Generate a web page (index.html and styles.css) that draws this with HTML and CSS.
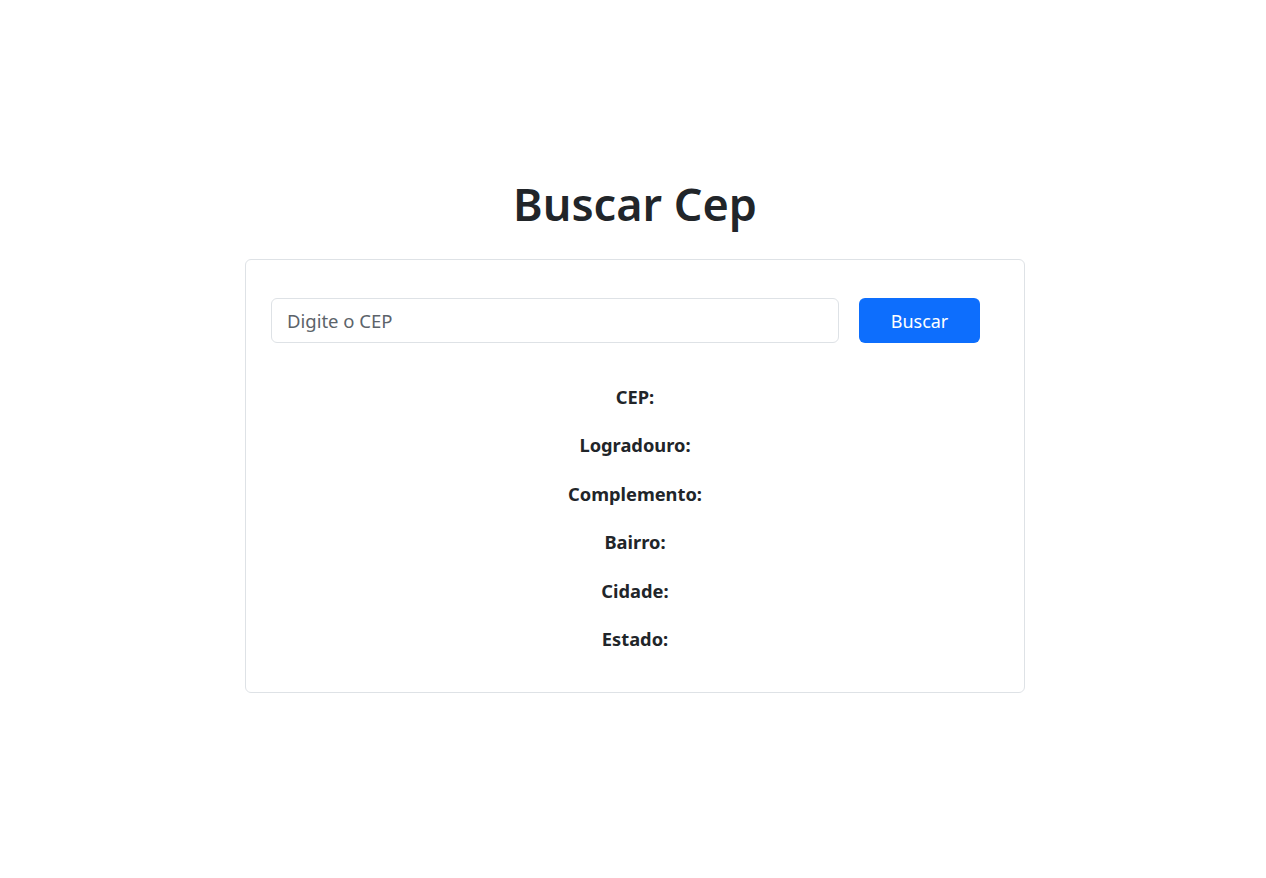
FILE: index.html
```html
<!DOCTYPE html>
<html lang="pt-BR">
<head>
<meta charset="utf-8">
<title>Buscar Cep</title>
<link rel="stylesheet" href="styles.css">
</head>
<body>
<main class="page">
  <h1 class="title">Buscar Cep</h1>
  <section class="card">
    <form class="search">
      <input class="search-input" type="text" placeholder="Digite o CEP">
      <button class="search-btn" type="button">Buscar</button>
    </form>
    <div class="results">
      <p class="field">CEP:</p>
      <p class="field">Logradouro:</p>
      <p class="field">Complemento:</p>
      <p class="field">Bairro:</p>
      <p class="field">Cidade:</p>
      <p class="field">Estado:</p>
    </div>
  </section>
</main>
</body>
</html>
```
FILE: styles.css
```css
* { box-sizing: border-box; }
html, body { margin: 0; padding: 0; background: #fff; }
body {
  font-family: "Noto Sans", "Open Sans", sans-serif;
  color: #212529;
}
.page {
  width: 780px;
  margin: 0 auto;
  padding-top: 176px;
  position: relative;
  left: 2px;
}
.title {
  margin: 0 0 27px;
  text-align: center;
  font-size: 45px;
  line-height: 56px;
  font-weight: 600;
  color: #212529;
}
.card {
  border: 1px solid #dee2e6;
  border-radius: 6px;
  padding: 38px 25px 40px 25px;
  height: 434px;
}
.search {
  display: flex;
  gap: 20px;
  width: 709px;
  margin: 0;
}
.search-input {
  width: 568px;
  height: 45px;
  border: 1px solid #dee2e6;
  border-radius: 6px;
  padding: 0 15px;
  font-family: inherit;
  font-size: 18.5px;
  color: #212529;
  outline: none;
}
.search-input::placeholder { color: #5c636a; }
.search-btn {
  width: 121px;
  height: 45px;
  border: none;
  border-radius: 6px;
  background: #0d6efd;
  color: #fff;
  font-family: inherit;
  font-size: 18px;
  cursor: pointer;
}
.results {
  margin-top: 39.5px;
  display: flex;
  flex-direction: column;
  align-items: center;
  gap: 21.5px;
}
.field {
  margin: 0;
  font-size: 18.3px;
  line-height: 27px;
  font-weight: 700;
  color: #212529;
}
```
